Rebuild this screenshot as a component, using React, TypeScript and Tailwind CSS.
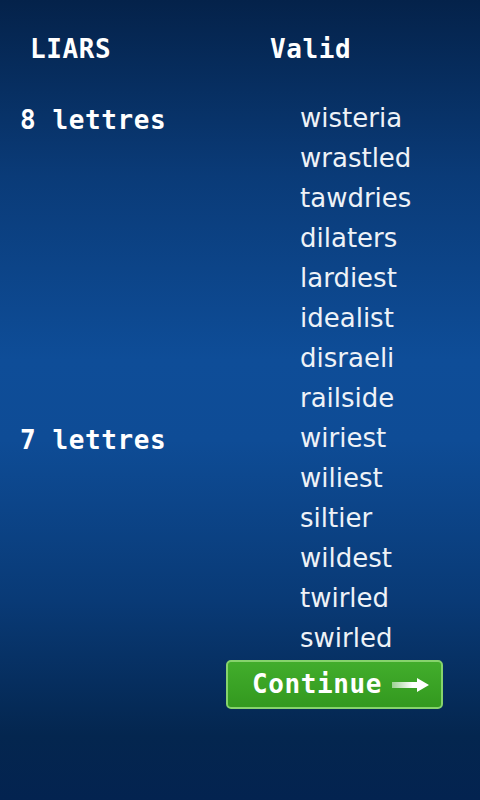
const groups = [
  {
    label: "8 lettres",
    words: ["wisteria", "wrastled", "tawdries", "dilaters", "lardiest", "idealist", "disraeli", "railside"],
  },
  {
    label: "7 lettres",
    words: ["wiriest", "wiliest", "siltier", "wildest", "twirled", "swirled"],
  },
];

export default function App() {
  return (
    <div className="w-[480px] h-[800px] overflow-hidden bg-[linear-gradient(180deg,#04224a_0%,#0a3b78_22%,#0e4d98_45%,#0e4c96_55%,#093a76_75%,#04264f_92%,#032350_100%)] text-white">
      <div className="flex pt-[29px] h-[69px] items-center font-['DejaVu_Sans_Mono',monospace] font-bold text-[26px] tracking-[0.6px] leading-[40px]">
        <div className="w-[270px] pl-[30px]">LIARS</div>
        <div>Valid</div>
      </div>
      <div className="mt-[29px]">
        {groups.map((g) => (
          <div key={g.label} className="flex">
            <div className="w-[300px] pl-[20px] pt-[2px] font-['DejaVu_Sans_Mono',monospace] font-bold text-[26px] tracking-[0.6px] leading-[40px]">
              {g.label}
            </div>
            <div className="flex flex-col font-['DejaVu_Sans',sans-serif] text-[26px] leading-[40px] text-[#eef2f7]">
              {g.words.map((w) => (
                <span key={w}>{w}</span>
              ))}
            </div>
          </div>
        ))}
      </div>
      <button className="ml-[226px] mt-[2px] w-[217px] h-[49px] rounded-[5px] border-2 border-[#86d36c] bg-[linear-gradient(#42ad2c,#33991f)] flex items-center pl-[24px] gap-[10px] font-['DejaVu_Sans_Mono',monospace] font-bold text-[26px] tracking-[0.6px] text-white">
        <span>Continue</span>
        <svg width="38" height="16" viewBox="0 0 38 16">
          <defs>
            <linearGradient id="ar" x1="0" x2="1" y1="0" y2="0">
              <stop offset="0" stopColor="#ffffff" stopOpacity="0.5" />
              <stop offset="0.55" stopColor="#ffffff" />
              <stop offset="1" stopColor="#ffffff" />
            </linearGradient>
          </defs>
          <path d="M0 5 H25 V1 L37 8 L25 15 V11 H0 Z" fill="url(#ar)" />
        </svg>
      </button>
    </div>
  );
}
